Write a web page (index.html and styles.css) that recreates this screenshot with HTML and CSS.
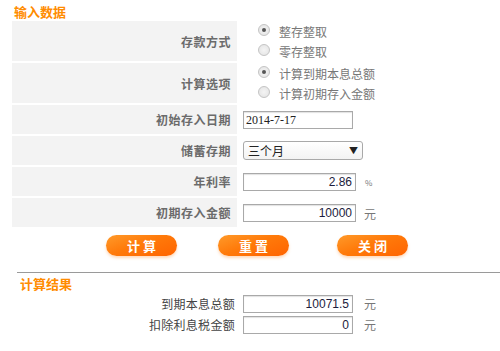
FILE: index.html
```html
<!DOCTYPE html>
<html>
<head>
    <title>存款计算器</title>
    <link rel="stylesheet" href="styles.css">
</head>
<body>
    <div id="calc">
        <!-- 输入数据 -->
        <div class="section-title">输入数据</div>
        <table class="form-table">
            <tr class="tall">
                <td class="label">存款方式</td>
                <td class="field">
                    <div class="radio-line"><span class="radio checked"></span>整存整取</div>
                    <div class="radio-line"><span class="radio"></span>零存整取</div>
                </td>
            </tr>
            <tr class="tall">
                <td class="label">计算选项</td>
                <td class="field">
                    <div class="radio-line"><span class="radio checked"></span>计算到期本息总额</div>
                    <div class="radio-line"><span class="radio"></span>计算初期存入金额</div>
                </td>
            </tr>
            <tr>
                <td class="label">初始存入日期</td>
                <td class="field"><input type="text" class="box date" value="2014-7-17"></td>
            </tr>
            <tr>
                <td class="label">储蓄存期</td>
                <td class="field">
                    <div class="select"><span>三个月</span><span class="arrow">▼</span></div>
                </td>
            </tr>
            <tr>
                <td class="label">年利率</td>
                <td class="field"><input type="text" class="box num" value="2.86"><span class="unit pct">%</span></td>
            </tr>
            <tr>
                <td class="label">初期存入金额</td>
                <td class="field"><input type="text" class="box num" value="10000"><span class="unit">元</span></td>
            </tr>
        </table>

        <div class="buttons">
            <button class="btn">计算</button>
            <button class="btn btn-reset">重置</button>
            <button class="btn btn-close">关闭</button>
        </div>

        <div class="divider"></div>

        <!-- 计算结果 -->
        <div class="section-title result-title">计算结果</div>
        <div class="results">
            <div class="res-label">到期本息总额</div>
            <input type="text" class="box num" value="10071.5">
            <span class="unit">元</span>
            <div class="res-label">扣除利息税金额</div>
            <input type="text" class="box num" value="0">
            <span class="unit">元</span>
        </div>
    </div>
</body>
</html>
```

FILE: styles.css
```css
/* 存款计算器 */
body {
    margin: 0;
    padding: 0;
    background: #fff;
    font-family: "Noto Sans CJK SC", "Liberation Sans", sans-serif;
    font-size: 12px;
    color: #666;
}

#calc {
    width: 500px;
}

.section-title {
    margin-left: 14px;
    padding-top: 2px;
    height: 19px;
    line-height: 19px;
    color: #ff8c00;
    font-weight: bold;
    font-size: 13px;
}

/* 输入表格 */
.form-table {
    margin-left: 12px;
    width: 470px;
    border-collapse: separate;
    border-spacing: 0 2px;
    margin-top: -2px;
}

.form-table tr {
    height: 29px;
}

.form-table tr.tall {
    height: 40px;
}

.form-table td {
    padding: 0;
}

.label {
    width: 219px;
    padding-right: 6px !important;
    background: #f3f3f3;
    text-align: right;
    font-weight: bold;
    color: #6b6b6b;
    letter-spacing: 0.5px;
}

.field {
    padding-left: 6px !important;
    background: #fff;
}

.radio-line {
    display: flex;
    align-items: center;
    height: 19px;
    line-height: 19px;
    color: #777;
    padding-top: 1px;
}

.radio {
    display: inline-block;
    width: 10px;
    height: 10px;
    margin: -4px 9px 0 15px;
    border: 1px solid #c4c4c4;
    border-radius: 50%;
    background: radial-gradient(circle, #f4f4f4 0%, #e2e2e2 100%);
    position: relative;
}

.radio.checked::after {
    content: "";
    position: absolute;
    left: 3px;
    top: 3px;
    width: 4px;
    height: 4px;
    border-radius: 50%;
    background: #555;
}

/* 输入框 */
.box {
    box-sizing: border-box;
    width: 110px;
    height: 18px;
    padding: 0 3px;
    border: 1px solid #a9a9a9;
    box-shadow: inset 0 1px 1px #e2e2e2;
    font-family: "Liberation Sans", sans-serif;
    font-size: 12px;
    color: #1c1c3c;
    vertical-align: middle;
    outline: none;
}

.box.date {
    font-family: "Liberation Serif", serif;
    color: #222;
    padding-left: 2px;
}

.box.num {
    text-align: right;
    width: 113px;
}

.select {
    box-sizing: border-box;
    width: 120px;
    height: 19px;
    display: flex;
    align-items: center;
    justify-content: space-between;
    padding: 0 4px 0 4px;
    border: 1px solid #a9a9a9;
    border-radius: 3px;
    background: linear-gradient(#fff, #f3f3f3);
    color: #222;
    font-size: 12px;
}

.select .arrow {
    font-size: 9px;
    color: #222;
}

.unit {
    margin-left: 8px;
    vertical-align: middle;
    color: #777;
}

.unit.pct {
    font-size: 8px;
    margin-left: 9px;
}

/* 按钮 */
.buttons {
    display: flex;
    padding-left: 106px;
    margin-top: 6px;
}

.btn {
    width: 71px;
    height: 21px;
    border: none;
    border-radius: 11px;
    background: linear-gradient(160deg, #ff9a2a 0%, #ff7a0a 45%, #ff6400 100%);
    box-shadow: 0 2px 3px rgba(255, 150, 60, 0.35);
    color: #fff;
    font-family: "Noto Sans CJK SC", sans-serif;
    font-weight: bold;
    font-size: 13px;
    letter-spacing: 3px;
    padding: 0 0 0 3px;
    line-height: 21px;
    cursor: pointer;
}

.btn-reset {
    margin-left: 41px;
}

.btn-close {
    margin-left: 48px;
}

.divider {
    margin: 16px 0 0 17px;
    border-top: 1px solid #9a9a9a;
}

.result-title {
    margin-left: 20px;
    padding-top: 2px;
    height: 18px;
    line-height: 18px;
}

/* 计算结果 */
.results {
    display: grid;
    grid-template-columns: 235px 110px auto;
    grid-auto-rows: 21px;
    align-items: center;
    column-gap: 8px;
}

.res-label {
    text-align: right;
    color: #444;
    letter-spacing: 0.3px;
}

.results .box {
    width: 110px;
}

.results .unit {
    margin-left: 3px;
}
```
